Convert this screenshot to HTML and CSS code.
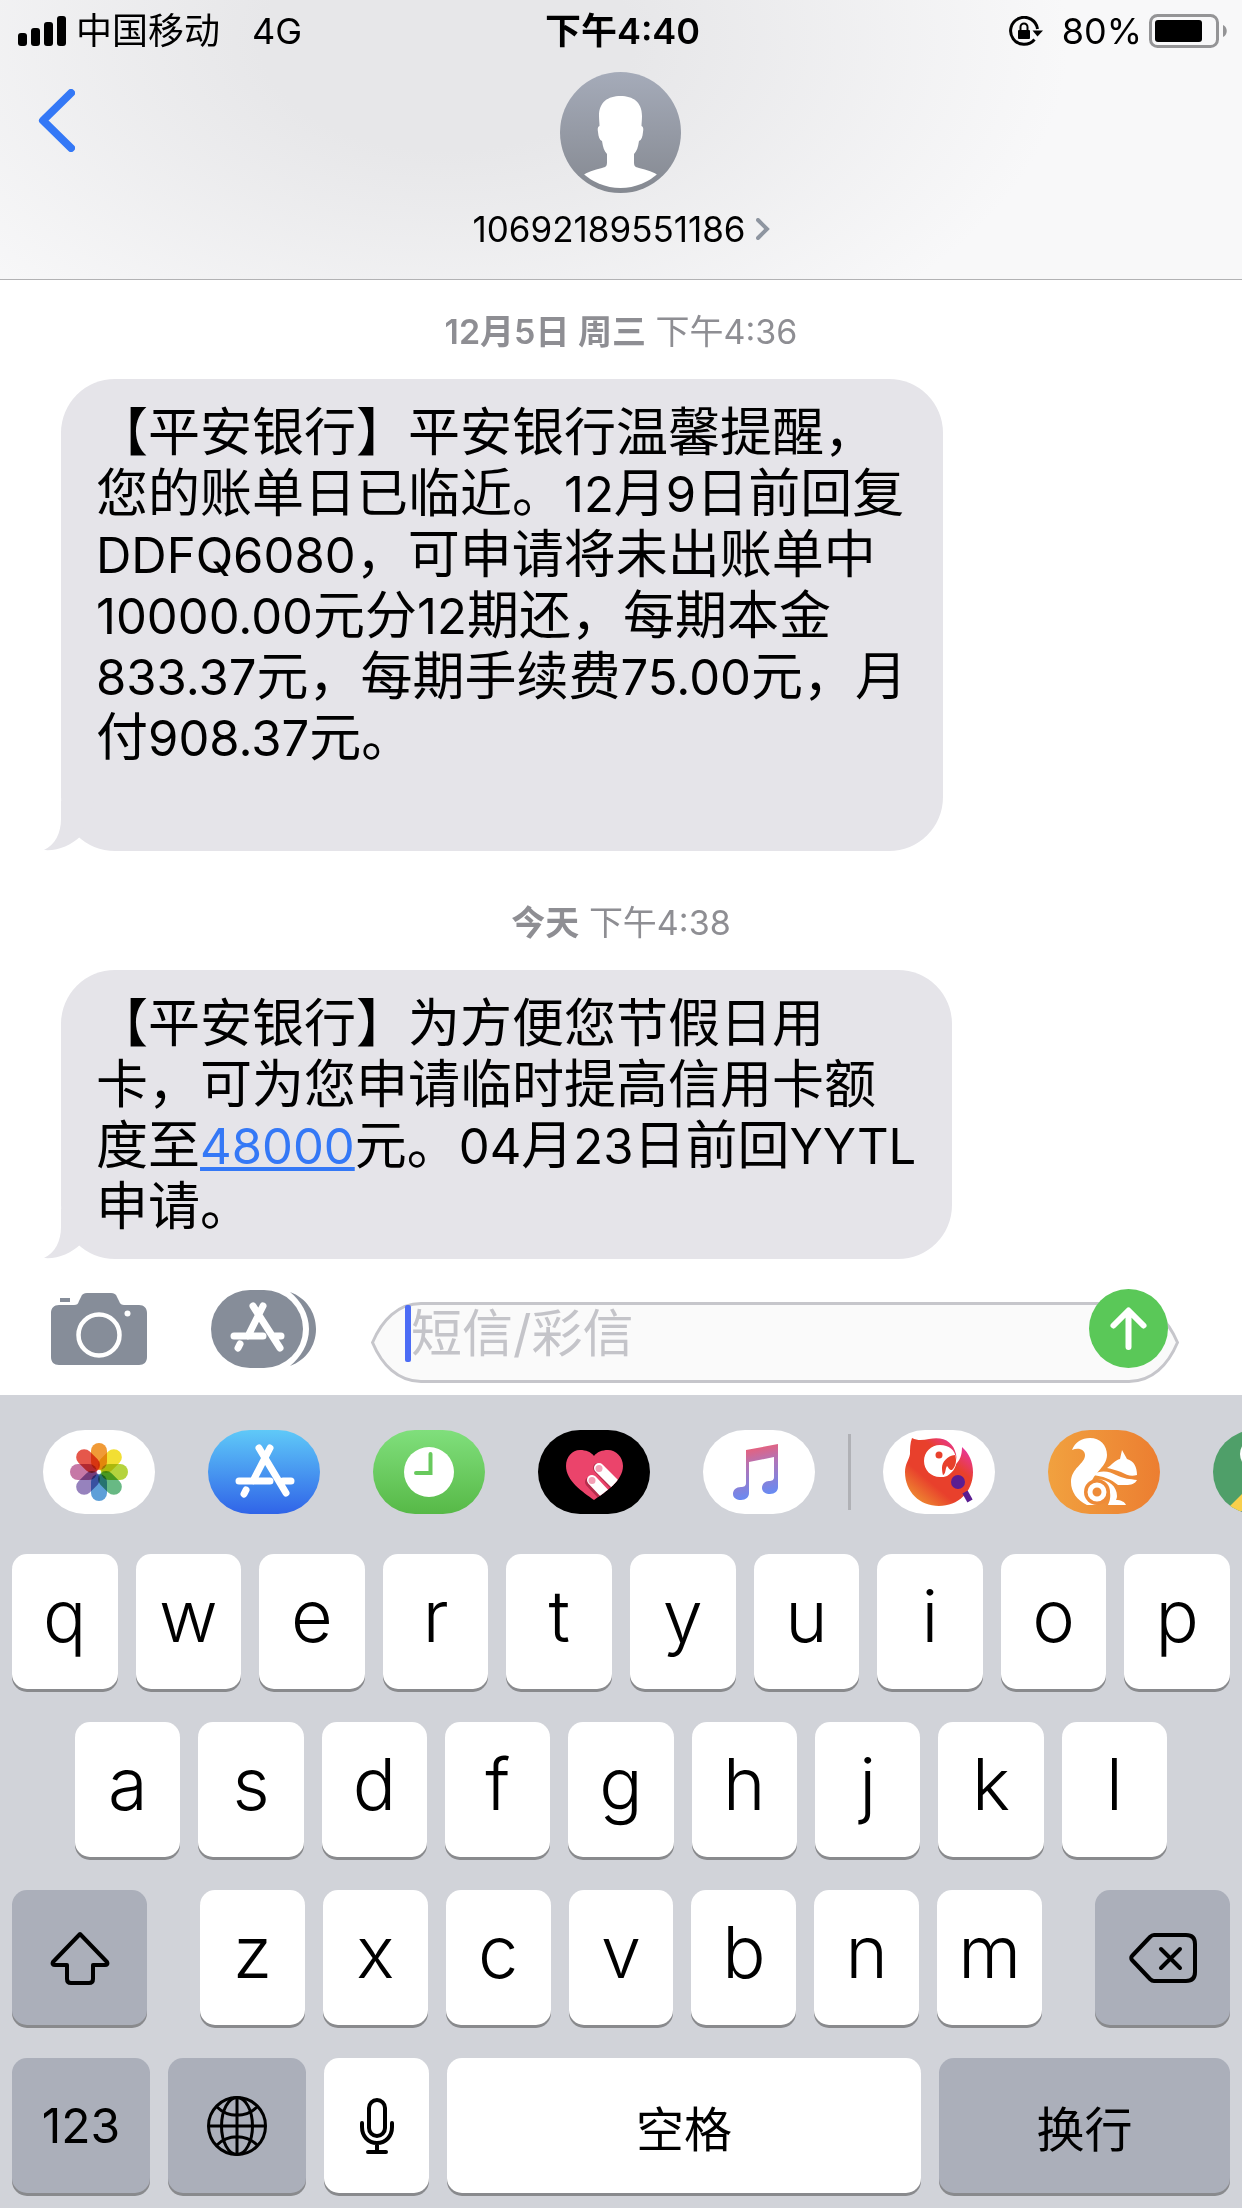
FILE: index.html
```html
<!DOCTYPE html>
<html lang="zh-CN">
<head>
    <meta charset="utf-8">
    <title>10692189551186</title>
    <link rel="stylesheet" href="styles.css">
</head>
<body>
    <header class="header">
        <div class="status">
            <div class="status-left">
                <svg class="signal" viewBox="0 0 48 30"><rect x="0" y="17" width="9" height="13" rx="3"/><rect x="13" y="12" width="9" height="18" rx="3"/><rect x="26" y="6" width="9" height="24" rx="3"/><rect x="39" y="0" width="9" height="30" rx="3"/></svg>
                <span>中国移动</span>
                <span class="network">4G</span>
            </div>
            <div class="time">下午4:40</div>
            <div class="status-right">
                <svg class="lock" viewBox="0 0 34 30"><path d="M25.500 23.500A13.500 13.500 0 1 1 28.500 13" fill="none" stroke="#000" stroke-width="3"/><path d="M23.500 14.500h10.500l-5.500 6z"/><rect x="9" y="14" width="12" height="9" rx="1"/><path d="M11.500 14v-3a3.500 3.500 0 0 1 7 0v3" fill="none" stroke="#000" stroke-width="2"/></svg>
                <span>80%</span>
                <svg class="battery" viewBox="0 0 78 34"><rect x="1.500" y="1.500" width="67" height="31" rx="7" fill="none" stroke="#949496" stroke-width="3"/><rect x="6" y="6" width="47" height="22" rx="3"/><path d="M74 11c5 2 5 10 0 12z" fill="#949496"/></svg>
            </div>
        </div>
        <div class="contact-bar">
            <button class="back" aria-label="返回"><svg viewBox="0 0 37 63"><path d="M33 4L5 31.500 33 59" fill="none" stroke="#3478f6" stroke-width="8" stroke-linecap="round" stroke-linejoin="round"/></svg></button>
            <a class="contact" href="#">
                <svg class="avatar" viewBox="0 0 121 121">
                    <defs>
                        <linearGradient id="avatarBg" x1="0" y1="0" x2="0" y2="1"><stop offset="0" stop-color="#a5abb9"/><stop offset="1" stop-color="#858991"/></linearGradient>
                        <clipPath id="avatarClip"><circle cx="60.500" cy="60.500" r="55.500"/></clipPath>
                    </defs>
                    <circle cx="60.500" cy="60.500" r="60.500" fill="url(#avatarBg)"/>
                    <path d="M60.500 24C48 24 39 30 39 44c0 4 .5 7 .5 10-2 1-2 3-1.500 6 .5 5 1.500 8 4 9 1 6 2 10 5 13v8c0 4-1 5-5 6-8 2-15 4-20 8v20h77v-20c-5-4-12-6-20-8-4-1-5-2-5-6v-8c3-3 4-7 5-13 2.500-1 3.500-4 4-9 .5-3 .5-5-1.500-6 0-3 .5-6 .5-10C82 30 73 24 60.500 24z" fill="#fff" clip-path="url(#avatarClip)"/>
                </svg>
                <span class="number">10692189551186<svg class="more" viewBox="0 0 14 22"><path d="M2 2l9 9-9 9" fill="none" stroke="#8e95a0" stroke-width="4" stroke-linecap="round"/></svg></span>
            </a>
        </div>
    </header>

    <main class="messages">
        <p class="date"><b>12月5日 周三</b> 下午4:36</p>
        <div class="bubble">
            【平安银行】平安银行温馨提醒，<br>您的账单日已临近。<span>12</span>月<span>9</span>日前回复<br><span>DDFQ6080</span>，可申请将未出账单中<br><span>10000.00</span>元分<span>12</span>期还，每期本金<br><span>833.37</span>元，每期手续费<span>75.00</span>元，月<br>付<span>908.37</span>元。<br>&nbsp;
            <svg class="tail" viewBox="0 0 50 50"><path d="M17 0v18c0 14-6 26-17 31 14 1 26-4 37-14L50 0z"/></svg>
        </div>
        <p class="date"><b>今天</b> 下午4:38</p>
        <div class="bubble">
            【平安银行】为方便您节假日用<br>卡，可为您申请临时提高信用卡额<br>度至<a href="#">48000</a>元。<span>04</span>月<span>23</span>日前回<span>YYTL</span><br>申请。
            <svg class="tail" viewBox="0 0 50 50"><path d="M17 0v18c0 14-6 26-17 31 14 1 26-4 37-14L50 0z"/></svg>
        </div>
    </main>

    <form class="composer">
        <button type="button" class="camera" aria-label="相机"><svg viewBox="0 0 96 72"><path d="M9 5h10v4H9zM8 12h15c3 0 4-1 5-4l2-4c1-3 3-4 6-4h24c3 0 5 1 6 4l2 4c1 3 3 4 5 4h15c5 0 8 3 8 8v44c0 5-3 8-8 8H8c-5 0-8-3-8-8V20c0-5 3-8 8-8z" fill="#868d99"/><circle cx="48" cy="42" r="20.500" fill="none" stroke="#fff" stroke-width="4.500"/><circle cx="76.500" cy="20.500" r="3" fill="#fff"/></svg></button>
        <button type="button" class="apps" aria-label="App Store">
            <svg viewBox="0 0 106 78">
                <path d="M39 0h14a39 39 0 0 1 0 78H39A39 39 0 0 1 39 0z" fill="#868d99"/>
                <path d="M79 2c16 6 26 20 26 37S95 70 79 76c11-9 19-22 19-37S90 11 79 2z" fill="#868d99"/>
                <g stroke="#fff" stroke-width="7" stroke-linecap="round" fill="none"><path d="M52 16L37 46M42 16l27 42M23 46h29M64 46h6M29 54l-2 4"/></g>
            </svg>
        </button>
        <div class="field">
            <svg class="cap" viewBox="0 0 50 81"><path d="M50 1.500C27 1.500 11 18 1.500 40.500 11 63 27 79.500 50 79.500" fill="#fafafa" stroke="#c6c6cb" stroke-width="3"/></svg>
            <label class="box"><span class="caret"></span><input type="text" placeholder="短信/彩信" aria-label="短信/彩信"></label>
            <svg class="cap" viewBox="0 0 50 81"><path d="M0 1.500C23 1.500 39 18 48.500 40.500 39 63 23 79.500 0 79.500" fill="#fafafa" stroke="#c6c6cb" stroke-width="3"/></svg>
            <button type="submit" class="send" aria-label="发送"><svg viewBox="0 0 79 79"><circle cx="39.500" cy="39.500" r="39.500" fill="#5ac858"/><path d="M39.500 58V22M24.500 36.500l15-15 15 15" fill="none" stroke="#fff" stroke-width="6" stroke-linecap="round" stroke-linejoin="round"/></svg></button>
        </div>
    </form>

    <section class="keyboard">
        <nav class="app-strip">
            <button class="app photos" aria-label="照片">
                <svg viewBox="0 0 112 84">
                    <g class="petals">
                        <rect x="48" y="13" width="16" height="27" rx="8" fill="#f09a37"/>
                        <rect x="48" y="13" width="16" height="27" rx="8" fill="#f2df33" transform="rotate(45 56 42)"/>
                        <rect x="48" y="13" width="16" height="27" rx="8" fill="#b5d33d" transform="rotate(90 56 42)"/>
                        <rect x="48" y="13" width="16" height="27" rx="8" fill="#68b984" transform="rotate(135 56 42)"/>
                        <rect x="48" y="13" width="16" height="27" rx="8" fill="#5e9fd8" transform="rotate(180 56 42)"/>
                        <rect x="48" y="13" width="16" height="27" rx="8" fill="#9682bd" transform="rotate(225 56 42)"/>
                        <rect x="48" y="13" width="16" height="27" rx="8" fill="#c678a6" transform="rotate(270 56 42)"/>
                        <rect x="48" y="13" width="16" height="27" rx="8" fill="#e5574b" transform="rotate(315 56 42)"/>
                    </g>
                </svg>
            </button>
            <button class="app store" aria-label="App Store">
                <svg viewBox="0 0 112 84"><g stroke="#fff" stroke-width="7" stroke-linecap="round" fill="none"><path d="M62 18L45 51M51 18l27 45M31 51h31M75 51h8M38 60l-2 4"/></g></svg>
            </button>
            <button class="app clock" aria-label="时钟">
                <svg viewBox="0 0 112 84"><circle cx="56" cy="42" r="25" fill="#fff"/><path d="M57.500 24v19H43" fill="none" stroke="#68c95d" stroke-width="4" stroke-linecap="round"/></svg>
            </button>
            <button class="app touch" aria-label="Digital Touch">
                <svg viewBox="0 0 112 84">
                    <defs><clipPath id="heart"><path d="M56 70C45 62 28 51 28 36c0-9 6-16 14-16 6 0 11 2 14 6 3-4 8-6 14-6 8 0 15 7 15 16 0 15-18 26-29 34z"/></clipPath></defs>
                    <g clip-path="url(#heart)">
                        <path d="M28 20h58v50H28z" fill="#eb446b"/>
                        <path d="M60 38l34 36M52 52l30 32" stroke="#b42d4c" stroke-width="10" stroke-linecap="round"/>
                        <path d="M61 38l34 34M54 50l30 32" stroke="#fff" stroke-width="10" stroke-linecap="round"/>
                        <circle cx="61" cy="38.500" r="3.500" fill="#f3a0b6"/><circle cx="54" cy="50.500" r="3.500" fill="#f3a0b6"/>
                    </g>
                </svg>
            </button>
            <button class="app music" aria-label="音乐">
                <svg viewBox="0 0 112 84">
                    <defs><linearGradient id="note" x1="0.400" y1="0" x2="0.600" y2="1"><stop offset="0" stop-color="#f35c6e"/><stop offset="0.350" stop-color="#b573b4"/><stop offset="1" stop-color="#5f8dfa"/></linearGradient></defs>
                    <path d="M43 20l32-6v43c0 4-3 7-8 7-4 0-8-2-8-6s3-7 7-7c3 0 5-1 5-4V27l-25 5v31c0 4-3 7-8 7-4 0-8-2-8-6s3-7 8-7c3 0 5-1 5-4z" fill="url(#note)"/>
                </svg>
            </button>
            <span class="divider"></span>
            <button class="app bird" aria-label="唱吧">
                <svg viewBox="0 0 112 84">
                    <defs><linearGradient id="parrot" x1="1" y1="0.100" x2="0.250" y2="1"><stop offset="0" stop-color="#e932c5"/><stop offset="0.350" stop-color="#e8402c"/><stop offset="0.700" stop-color="#e8402c"/><stop offset="1" stop-color="#ee8a31"/></linearGradient></defs>
                    <path d="M29 8c6 3 11 2 17 1 15-3 24 3 27 15 1 4 0 8-2 12 6-5 8-11 8-19 7 6 11 15 11 25 0 20-15 34-34 34S22 62 22 42c0-8 4-12 5-18 0-5 0-11 2-16z" fill="url(#parrot)"/>
                    <path d="M57 15c9 0 15 5 16 13 2 6-2 14-9 18-2 1-5 1-7 1-9 0-16-7-16-16s7-16 16-16z" fill="#fff"/>
                    <path d="M72 25c-8 1-13 7-13 13 0 4 1 7 1 7 3-1 2-6 4-9 2 2 2 4 5 4 4-4 5-10 3-15z" fill="#e8402c"/>
                    <circle cx="56" cy="25" r="3.500" fill="#e8402c"/><circle cx="75" cy="52" r="7" fill="#5b1d91"/><path d="M82 62l5 9" stroke="#5b1d91" stroke-width="6"/>
                </svg>
            </button>
            <button class="app squirrel" aria-label="UC浏览器">
                <svg viewBox="0 0 112 84">
                    <path d="M24 20c3-8 10-12 18-12 10 0 17 7 17 17 0 13-17 19-17 34 0 7 3 12 8 16H39c-10-5-16-13-16-23 0-14 14-18 14-27 0-5-6-8-13-5z" fill="#fff"/>
                    <path d="M59 38c5-3 8-8 13-9l2-9 5 9c7 2 10 8 10 16-6 2-10 0-16-3-5-2-9-3-14-4z" fill="#fff"/>
                    <path d="M44 45c10-6 18-3 24 0 8 4 14 4 21 5-2 4-6 5-11 5h-8c-7-6-15-9-26-10z" fill="#fff"/>
                    <path d="M40 52c14-7 29 1 29 14 0 2-1 4-1 4 5 0 9 2 10 5H60c4-7 4-21-9-22z" fill="#fff"/>
                    <circle cx="49" cy="62" r="13" fill="#ee8b38"/><circle cx="49" cy="62" r="7" fill="none" stroke="#fff" stroke-width="5"/>
                </svg>
            </button>
            <button class="app maps" aria-label="地图">
                <svg viewBox="0 0 112 84"><path d="M17 76L60 33v16L26 84z" fill="#f8cf4c"/><path d="M26 84L60 50v34z" fill="#4a7fd6"/><circle cx="43" cy="24" r="16" fill="#fff"/></svg>
            </button>
        </nav>

        <div class="keys">
            <div class="row">
                <button class="key">q</button><button class="key">w</button><button class="key">e</button><button class="key">r</button><button class="key">t</button><button class="key">y</button><button class="key">u</button><button class="key">i</button><button class="key">o</button><button class="key">p</button>
            </div>
            <div class="row row-middle">
                <button class="key">a</button><button class="key">s</button><button class="key">d</button><button class="key">f</button><button class="key">g</button><button class="key">h</button><button class="key">j</button><button class="key">k</button><button class="key">l</button>
            </div>
            <div class="row row-shift">
                <button class="key dark" aria-label="Shift"><svg width="60" height="54" viewBox="0 0 60 54"><path d="M30 3L3 31c-1 2 0 3 2 3h12v14c0 2 1 4 4 4h18c3 0 4-2 4-4V34h12c2 0 3-1 2-3z" fill="none" stroke="#000" stroke-width="4" stroke-linejoin="round"/></svg></button>
                <div class="letters">
                    <button class="key">z</button><button class="key">x</button><button class="key">c</button><button class="key">v</button><button class="key">b</button><button class="key">n</button><button class="key">m</button>
                </div>
                <button class="key dark" aria-label="删除"><svg width="68" height="50" viewBox="0 0 68 50"><path d="M25 2h32c6 0 9 3 9 9v28c0 6-3 9-9 9H25c-2 0-3-1-4-2L3 27c-1-1-1-3 0-4L21 4c1-1 2-2 4-2zM32 16l19 19M51 16L32 35" fill="none" stroke="#000" stroke-width="4" stroke-linecap="round" stroke-linejoin="round"/></svg></button>
            </div>
            <div class="row">
                <button class="key dark wide">123</button>
                <button class="key dark wide" aria-label="切换键盘"><svg width="60" height="60" viewBox="0 0 60 60"><g fill="none" stroke="#000" stroke-width="3"><circle cx="30" cy="30" r="28.500"/><ellipse cx="30" cy="30" rx="15.500" ry="28.500"/><path d="M30 1v58M1 30h58M10 11c11 11 29 11 40 0M10 49c11-11 29-11 40 0"/></g></svg></button>
                <button class="key mic" aria-label="听写"><svg width="34" height="56" viewBox="0 0 34 56"><g fill="none" stroke="#000" stroke-width="4" stroke-linecap="round"><rect x="9" y="2" width="16" height="36" rx="8"/><path d="M2 25v4c0 9 6 16 15 16s15-7 15-16v-4M17 45v8M8 54h18"/></g></svg></button>
                <button class="key space">空格</button>
                <button class="key dark return">换行</button>
            </div>
        </div>
    </section>
</body>
</html>
```
FILE: styles.css
```css
* {
    box-sizing: border-box;
}
body {
    margin: 0;
    background: #fff;
    color: #000;
    font-family: Inter, "Noto Sans CJK SC", sans-serif;
    text-spacing-trim: space-all;
}
svg {
    display: block;
    flex: none;
}
button {
    border: none;
    padding: 0;
    background: none;
    color: #000;
    font-family: inherit;
    cursor: pointer;
}
a {
    color: #3478f6;
}

/* header */
.header {
    height: 280px;
    border-bottom: 1px solid #b2b2b4;
    background: radial-gradient(ellipse 50% 130% at 36% 15%, #e7e7e9 30%, #f8f8f9 100%);
}
.status {
    display: grid;
    grid-template-columns: 1fr auto 1fr;
    align-items: center;
    height: 60px;
    padding: 2px 15px 0 18px;
    font-size: 36px;
    line-height: 58px;
}
.status-left, .status-right {
    display: flex;
    align-items: center;
}
.status-right {
    justify-content: flex-end;
    gap: 7px;
}
.signal {
    width: 48px;
    height: 30px;
    margin-right: 10px;
}
.network {
    margin-left: 32px;
}
.time {
    font-weight: 600;
}
.lock {
    width: 34px;
    height: 30px;
    margin-right: 12px;
}
.battery {
    width: 78px;
    height: 34px;
}
.contact-bar {
    display: grid;
    grid-template-columns: 1fr auto 1fr;
    align-items: start;
    padding: 12px 38px 0;
}
.back {
    width: 37px;
    margin-top: 17px;
}
.contact {
    display: flex;
    flex-direction: column;
    align-items: center;
    color: #000;
    text-decoration: none;
}
.avatar {
    width: 121px;
    height: 121px;
}
.number {
    display: flex;
    align-items: center;
    gap: 10px;
    margin-top: 14px;
    font-size: 35px;
    line-height: 44px;
}
.more {
    width: 14px;
    height: 22px;
}

/* messages */
.messages {
    display: flex;
    flex-direction: column;
    align-items: flex-start;
    padding: 32px 61px 0;
}
.date {
    align-self: stretch;
    margin: 0 0 27px;
    color: #8e8e93;
    font-size: 34px;
    line-height: 40px;
    text-align: center;
}
.date b {
    font-weight: 600;
}
.bubble {
    position: relative;
    margin-bottom: 52px;
    padding: 23px 36px 22px 35px;
    border-radius: 54px;
    background: #e5e4e9;
    font-size: 52px;
    line-height: 61px;
    white-space: nowrap;
}
/* latin glyphs look larger than the chinese ones */
.bubble span, .bubble a {
    font-size: 49px;
    line-height: 1;
}
.bubble:last-child {
    margin-bottom: 0;
}
.tail {
    position: absolute;
    left: -17px;
    bottom: 0;
    width: 50px;
    height: 50px;
    fill: #e5e4e9;
}

/* composer */
.composer {
    display: flex;
    align-items: flex-start;
    padding: 31px 63px 12px 51px;
}
.camera {
    flex: none;
    width: 96px;
    margin: 3px 64px 0 0;
}
.apps {
    flex: none;
    width: 106px;
    margin-right: 54px;
}
.field {
    position: relative;
    display: flex;
    flex: 1;
    min-width: 0;
    margin-top: 12px;
}
.cap {
    width: 50px;
    height: 81px;
}
.box {
    display: flex;
    flex: 1;
    min-width: 0;
    height: 81px;
    border: solid #c6c6cb;
    border-width: 3px 0;
    background: #fafafa;
}
.caret {
    flex: none;
    width: 6px;
    height: 57px;
    margin-left: -16px;
    border-radius: 2px;
    background: #4c6cf5;
}
.box input {
    flex: 1;
    min-width: 0;
    height: 57px;
    padding: 0;
    border: none;
    background: none;
    font: inherit;
    font-size: 51px;
    outline: none;
}
.box input::placeholder {
    color: #c4c4c9;
}
.send {
    position: absolute;
    top: -13px;
    right: 11px;
    width: 79px;
    height: 79px;
}

/* keyboard */
.keyboard {
    background: #d1d3d9;
}
.app-strip {
    display: flex;
    align-items: center;
    gap: 53px;
    padding: 35px 0 40px 43px;
    overflow: hidden;
}
.app {
    flex: none;
    width: 112px;
    height: 84px;
    border-radius: 42px;
    background: #fff;
    overflow: hidden;
}
.petals rect {
    mix-blend-mode: multiply;
}
.store {
    background: linear-gradient(#5fc9f8, #3064e8);
}
.clock {
    background: linear-gradient(#80df7c, #57b947);
}
.touch {
    background: #000;
}
.squirrel {
    background: linear-gradient(90deg, #f1a13f, #ec7e31);
}
.maps {
    background: #4f9f69;
}
.divider {
    flex: none;
    width: 3px;
    height: 76px;
    margin: 0 -21px 0 -20px;
    background: #b0b1b6;
}
.keys {
    display: flex;
    flex-direction: column;
    gap: 33px;
    padding: 0 12px 15px;
}
.row, .letters {
    display: flex;
    gap: 18px;
}
.row-middle {
    padding: 0 63px;
}
.row-shift {
    gap: 53px;
}
.letters {
    flex: 1;
}
.key {
    display: flex;
    flex: 1;
    align-items: center;
    justify-content: center;
    min-width: 0;
    height: 135px;
    padding-bottom: 12px;
    border-radius: 15px;
    background: #fff;
    box-shadow: 0 3px 0 #898a8d;
    font-size: 72px;
    font-weight: 300;
    line-height: 80px;
}
.dark {
    padding-bottom: 0;
    background: #abafba;
}
.wide, .space, .return {
    font-size: 48px;
    font-weight: 400;
}
.space, .return {
    padding: 8px 0 0;
}
.row-shift .dark {
    flex: 0 0 135px;
}
.wide {
    flex: 0 0 138px;
}
.mic {
    flex: 0 0 105px;
    padding: 0;
}
.return {
    flex: 0 0 291px;
}
```
